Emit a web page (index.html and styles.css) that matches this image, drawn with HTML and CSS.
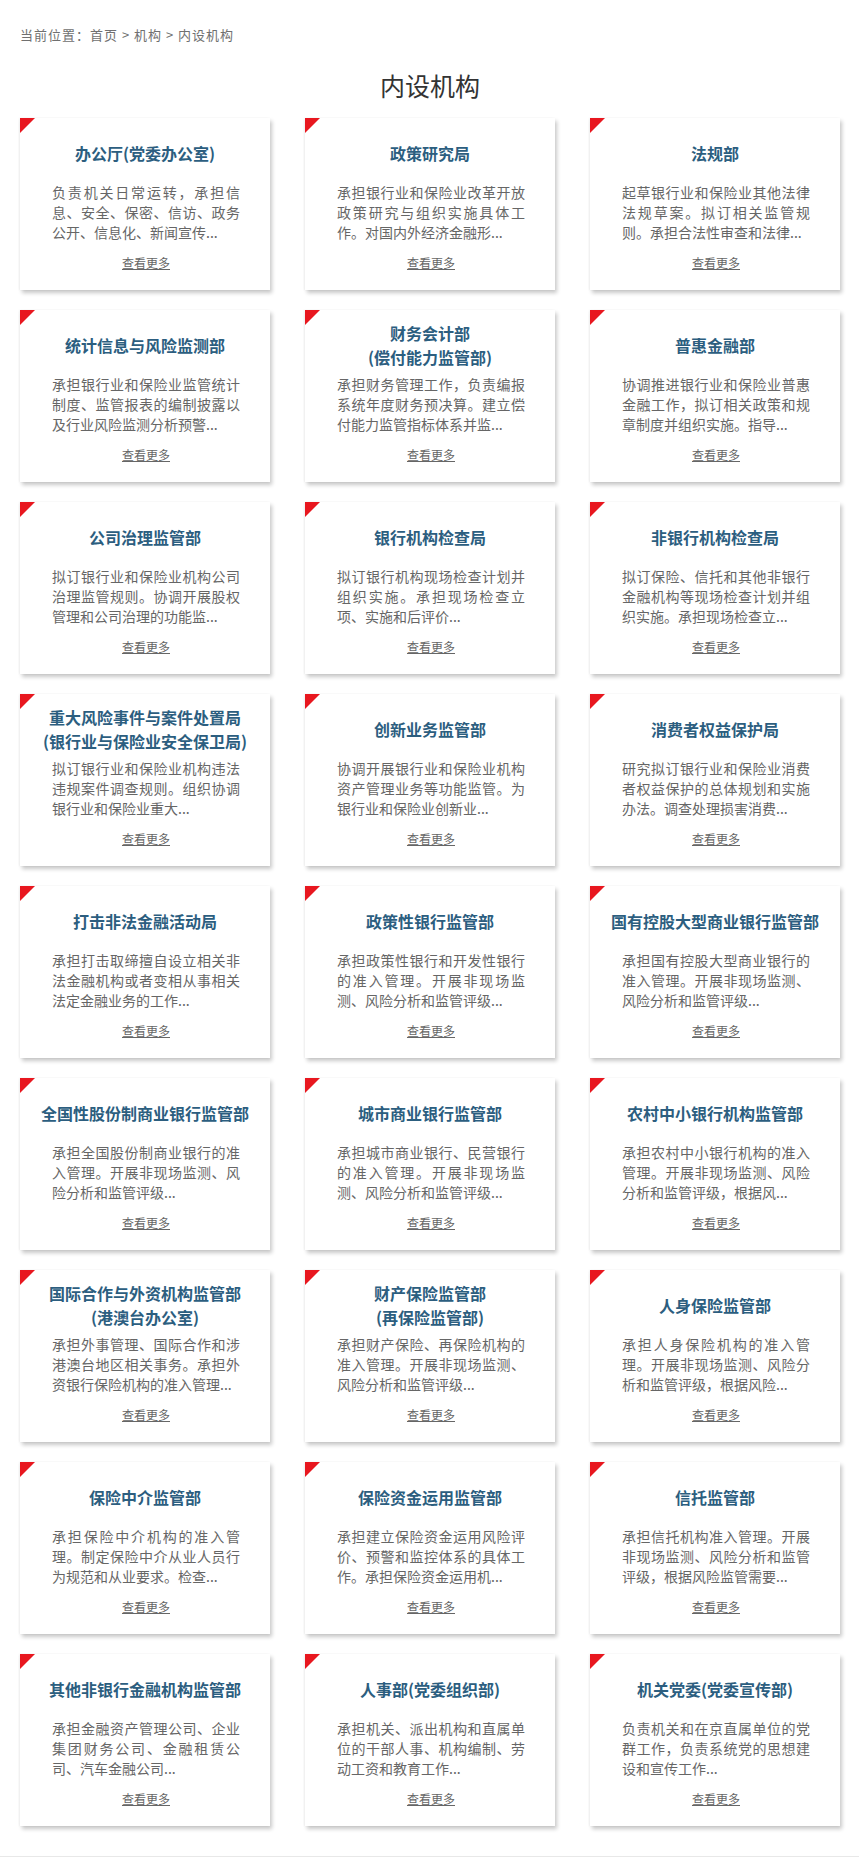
FILE: index.html
```html
<!DOCTYPE html>
<html lang="zh-CN">
<head>
<meta charset="utf-8">
<title>内设机构</title>
<link rel="stylesheet" href="styles.css">
</head>
<body>
<div class="page">
  <div class="crumb">当前位置：首页 &gt; 机构 &gt; 内设机构</div>
  <h1 class="page-title">内设机构</h1>
  <div class="grid">
    <div class="card"><div class="card-title"><h3>办公厅(党委办公室)</h3></div><p class="card-desc">负责机关日常运转，承担信息、安全、保密、信访、政务公开、信息化、新闻宣传...</p><a class="card-more" href="#">查看更多</a></div>
    <div class="card"><div class="card-title"><h3>政策研究局</h3></div><p class="card-desc">承担银行业和保险业改革开放政策研究与组织实施具体工作。对国内外经济金融形...</p><a class="card-more" href="#">查看更多</a></div>
    <div class="card"><div class="card-title"><h3>法规部</h3></div><p class="card-desc">起草银行业和保险业其他法律法规草案。拟订相关监管规则。承担合法性审查和法律...</p><a class="card-more" href="#">查看更多</a></div>

    <div class="card"><div class="card-title"><h3>统计信息与风险监测部</h3></div><p class="card-desc">承担银行业和保险业监管统计制度、监管报表的编制披露以及行业风险监测分析预警...</p><a class="card-more" href="#">查看更多</a></div>
    <div class="card"><div class="card-title"><h3>财务会计部<br>(偿付能力监管部)</h3></div><p class="card-desc">承担财务管理工作，负责编报系统年度财务预决算。建立偿付能力监管指标体系并监...</p><a class="card-more" href="#">查看更多</a></div>
    <div class="card"><div class="card-title"><h3>普惠金融部</h3></div><p class="card-desc">协调推进银行业和保险业普惠金融工作，拟订相关政策和规章制度并组织实施。指导...</p><a class="card-more" href="#">查看更多</a></div>

    <div class="card"><div class="card-title"><h3>公司治理监管部</h3></div><p class="card-desc">拟订银行业和保险业机构公司治理监管规则。协调开展股权管理和公司治理的功能监...</p><a class="card-more" href="#">查看更多</a></div>
    <div class="card"><div class="card-title"><h3>银行机构检查局</h3></div><p class="card-desc">拟订银行机构现场检查计划并组织实施。承担现场检查立项、实施和后评价...</p><a class="card-more" href="#">查看更多</a></div>
    <div class="card"><div class="card-title"><h3>非银行机构检查局</h3></div><p class="card-desc">拟订保险、信托和其他非银行金融机构等现场检查计划并组织实施。承担现场检查立...</p><a class="card-more" href="#">查看更多</a></div>

    <div class="card"><div class="card-title"><h3>重大风险事件与案件处置局<br>(银行业与保险业安全保卫局)</h3></div><p class="card-desc">拟订银行业和保险业机构违法违规案件调查规则。组织协调银行业和保险业重大...</p><a class="card-more" href="#">查看更多</a></div>
    <div class="card"><div class="card-title"><h3>创新业务监管部</h3></div><p class="card-desc">协调开展银行业和保险业机构资产管理业务等功能监管。为银行业和保险业创新业...</p><a class="card-more" href="#">查看更多</a></div>
    <div class="card"><div class="card-title"><h3>消费者权益保护局</h3></div><p class="card-desc">研究拟订银行业和保险业消费者权益保护的总体规划和实施办法。调查处理损害消费...</p><a class="card-more" href="#">查看更多</a></div>

    <div class="card"><div class="card-title"><h3>打击非法金融活动局</h3></div><p class="card-desc">承担打击取缔擅自设立相关非法金融机构或者变相从事相关法定金融业务的工作...</p><a class="card-more" href="#">查看更多</a></div>
    <div class="card"><div class="card-title"><h3>政策性银行监管部</h3></div><p class="card-desc">承担政策性银行和开发性银行的准入管理。开展非现场监测、风险分析和监管评级...</p><a class="card-more" href="#">查看更多</a></div>
    <div class="card"><div class="card-title"><h3>国有控股大型商业银行监管部</h3></div><p class="card-desc">承担国有控股大型商业银行的准入管理。开展非现场监测、风险分析和监管评级...</p><a class="card-more" href="#">查看更多</a></div>

    <div class="card"><div class="card-title"><h3>全国性股份制商业银行监管部</h3></div><p class="card-desc">承担全国股份制商业银行的准入管理。开展非现场监测、风险分析和监管评级...</p><a class="card-more" href="#">查看更多</a></div>
    <div class="card"><div class="card-title"><h3>城市商业银行监管部</h3></div><p class="card-desc">承担城市商业银行、民营银行的准入管理。开展非现场监测、风险分析和监管评级...</p><a class="card-more" href="#">查看更多</a></div>
    <div class="card"><div class="card-title"><h3>农村中小银行机构监管部</h3></div><p class="card-desc">承担农村中小银行机构的准入管理。开展非现场监测、风险分析和监管评级，根据风...</p><a class="card-more" href="#">查看更多</a></div>

    <div class="card"><div class="card-title"><h3>国际合作与外资机构监管部<br>(港澳台办公室)</h3></div><p class="card-desc">承担外事管理、国际合作和涉港澳台地区相关事务。承担外资银行保险机构的准入管理...</p><a class="card-more" href="#">查看更多</a></div>
    <div class="card"><div class="card-title"><h3>财产保险监管部<br>(再保险监管部)</h3></div><p class="card-desc">承担财产保险、再保险机构的准入管理。开展非现场监测、风险分析和监管评级...</p><a class="card-more" href="#">查看更多</a></div>
    <div class="card"><div class="card-title"><h3>人身保险监管部</h3></div><p class="card-desc">承担人身保险机构的准入管理。开展非现场监测、风险分析和监管评级，根据风险...</p><a class="card-more" href="#">查看更多</a></div>

    <div class="card"><div class="card-title"><h3>保险中介监管部</h3></div><p class="card-desc">承担保险中介机构的准入管理。制定保险中介从业人员行为规范和从业要求。检查...</p><a class="card-more" href="#">查看更多</a></div>
    <div class="card"><div class="card-title"><h3>保险资金运用监管部</h3></div><p class="card-desc">承担建立保险资金运用风险评价、预警和监控体系的具体工作。承担保险资金运用机...</p><a class="card-more" href="#">查看更多</a></div>
    <div class="card"><div class="card-title"><h3>信托监管部</h3></div><p class="card-desc">承担信托机构准入管理。开展非现场监测、风险分析和监管评级，根据风险监管需要...</p><a class="card-more" href="#">查看更多</a></div>

    <div class="card"><div class="card-title"><h3>其他非银行金融机构监管部</h3></div><p class="card-desc">承担金融资产管理公司、企业集团财务公司、金融租赁公司、汽车金融公司...</p><a class="card-more" href="#">查看更多</a></div>
    <div class="card"><div class="card-title"><h3>人事部(党委组织部)</h3></div><p class="card-desc">承担机关、派出机构和直属单位的干部人事、机构编制、劳动工资和教育工作...</p><a class="card-more" href="#">查看更多</a></div>
    <div class="card"><div class="card-title"><h3>机关党委(党委宣传部)</h3></div><p class="card-desc">负责机关和在京直属单位的党群工作，负责系统党的思想建设和宣传工作...</p><a class="card-more" href="#">查看更多</a></div>
  </div>
</div>
</body>
</html>
```

FILE: styles.css
```css
* { box-sizing: border-box; }
html, body { margin: 0; padding: 0; background: #fff; }
body {
  font-family: "Noto Sans CJK SC", "Noto Sans", "Liberation Sans", sans-serif;
  color: #666;
}
.page {
  width: 859px;
  padding: 26px 19px 30px 20px;
  border-bottom: 1px solid #e8e8e8;
}
.crumb {
  font-size: 13px;
  line-height: 18px;
  color: #707070;
  letter-spacing: 1px;
}
.page-title {
  margin: 26px 0 18px;
  font-size: 25px;
  line-height: 30px;
  font-weight: normal;
  color: #333;
  text-align: center;
}
.grid {
  display: grid;
  grid-template-columns: repeat(3, 250px);
  column-gap: 35px;
  row-gap: 20px;
}
.card {
  position: relative;
  height: 172px;
  background: #fff;
  padding: 11px 30px 0 32px;
  display: flex;
  flex-direction: column;
  box-shadow: 2px 3px 4px rgba(0,0,0,0.22), -1px 0 2px rgba(0,0,0,0.05);
}
.card::before {
  content: "";
  position: absolute;
  left: 0;
  top: 0;
  width: 0;
  height: 0;
  border-top: 15px solid #e8171f;
  border-right: 15px solid transparent;
}
.card-title {
  height: 48px;
  margin: 0 -22px 5px -24px;
  display: flex;
  align-items: center;
  justify-content: center;
}
.card-title h3 {
  margin: 0;
  font-size: 16px;
  line-height: 24px;
  font-weight: bold;
  color: #2c5e7f;
  text-align: center;
}
.card-desc {
  margin: 0;
  height: 60px;
  font-size: 14px;
  line-height: 20px;
  color: #666;
  text-align: justify;
}
.card-more {
  align-self: center;
  margin-top: 12px;
  font-size: 12px;
  line-height: 18px;
  color: #666;
  text-decoration: underline;
}
```
